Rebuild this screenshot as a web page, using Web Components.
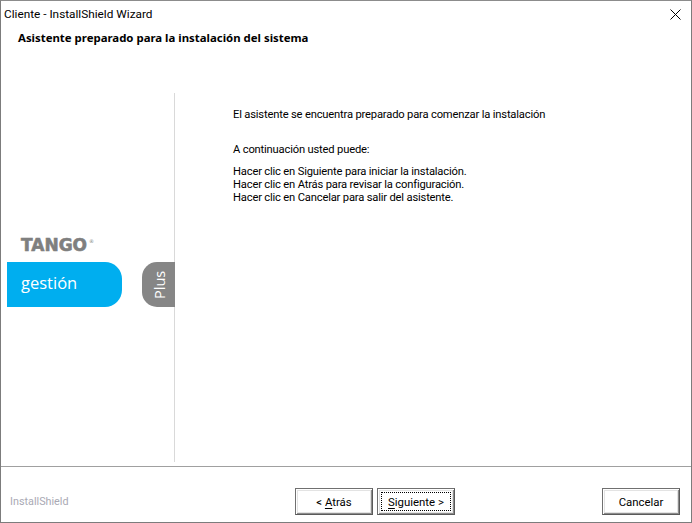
<!DOCTYPE html>
<html>
<head>
<meta charset="utf-8">
<title>Cliente - InstallShield Wizard</title>
<style>
  html, body { margin: 0; padding: 0; background: #fff; }
</style>
</head>
<body>
<wizard-window>
  <span slot="title">Cliente - InstallShield Wizard</span>
  <span slot="heading">Asistente preparado para la instalación del sistema</span>
  <tango-brand slot="side"></tango-brand>
  <wizard-message slot="main"></wizard-message>
  <wizard-button slot="back" label="&lt; " hot="A" rest="trás"></wizard-button>
  <wizard-button slot="next" label="" hot="S" rest="iguiente &gt;" focused></wizard-button>
  <wizard-button slot="cancel" rest="Cancelar"></wizard-button>
</wizard-window>

<script>
class WizardWindow extends HTMLElement {
  constructor() {
    super()
    this.attachShadow({ mode: 'open' })
    this.shadowRoot.innerHTML = /*html*/`
      <style>
        :host {
          display: flex;
          flex-direction: column;
          box-sizing: border-box;
          width: 692px;
          height: 523px;
          background: #fff;
          border: 1px solid #7c7c7c;
          border-top-color: #8c8c8c;
          font-family: Roboto, sans-serif;
          font-size: 11.2px;
          color: #000;
        }
        .titlebar {
          display: flex;
          justify-content: space-between;
          align-items: center;
          height: 26px;
          padding: 0 10px 0 3px;
          font-size: 11.8px;
          flex: none;
        }
        .close { width: 11px; height: 11px; display: block; }
        .heading {
          height: 24px;
          flex: none;
          padding-left: 17px;
          font-family: "Noto Sans", sans-serif;
          font-weight: 700;
          font-size: 11.4px;
          line-height: 22px;
        }
        .body {
          flex: 1;
          display: grid;
          grid-template-columns: 173px 1px 1fr;
          padding-top: 42px;
          padding-bottom: 4px;
        }
        .rule { background: #d9d9d9; }
        .foot {
          flex: none;
          box-sizing: border-box;
          height: 56px;
          border-top: 1px solid #a0a0a0;
          display: flex;
          align-items: flex-end;
          padding: 0 11px 7px 9px;
        }
        .brand { width: 285px; color: #a9a9b4; font-size: 10.8px; line-height: 14px; padding-bottom: 6px; }
        .gap { width: 4px; }
        .fill { flex: 1; }
      </style>
      <div class="titlebar">
        <slot name="title"></slot>
        <svg class="close" viewBox="0 0 11 11"><path d="M.5.5l10 10M10.500.5l-10 10" stroke="#000" fill="none"/></svg>
      </div>
      <div class="heading"><slot name="heading"></slot></div>
      <div class="body">
        <slot name="side"></slot>
        <div class="rule"></div>
        <slot name="main"></slot>
      </div>
      <div class="foot">
        <div class="brand">InstallShield</div>
        <slot name="back"></slot>
        <div class="gap"></div>
        <slot name="next"></slot>
        <div class="fill"></div>
        <slot name="cancel"></slot>
      </div>
    `
  }
}

class TangoBrand extends HTMLElement {
  constructor() {
    super()
    this.attachShadow({ mode: 'open' })
    this.shadowRoot.innerHTML = /*html*/`
      <style>
        :host {
          display: flex;
          flex-direction: column;
          justify-content: flex-start;
          padding-top: 144px;
          font-family: "Open Sans", sans-serif;
        }
        .logo {
          height: 16px;
          margin: 0 0 9px 20px;
          font-family: "DejaVu Sans", sans-serif;
          font-weight: 700;
          font-size: 17px;
          line-height: 16px;
          color: #7f7f7f;
          -webkit-text-stroke: .6px #7f7f7f;
          display: flex;
        }
        .logo sup { font-size: 5px; line-height: 8px; -webkit-text-stroke: 0; font-weight: 400; margin-left: 2px; }
        .row { display: flex; justify-content: space-between; align-items: stretch; padding-left: 6px; height: 45px; margin-right: -1px; }
        .gestion {
          width: 115px;
          background: #00aeef;
          color: #fff;
          border-radius: 0 17px 17px 0;
          font-size: 16.5px;
          line-height: 42px;
          padding-left: 14px;
          box-sizing: border-box;
        }
        .plus {
          width: 33px;
          background: #868686;
          color: #fff;
          font-size: 14.5px;
          writing-mode: vertical-rl;
          transform: rotate(180deg);
          border-radius: 0 15px 15px 0;
          text-align: center;
          line-height: 36px;
          position: relative;
        }
      </style>
      <div class="logo">TANGO<sup>®</sup></div>
      <div class="row">
        <div class="gestion">gestión</div>
        <div class="plus">Plus</div>
      </div>
    `
  }
}

class WizardMessage extends HTMLElement {
  constructor() {
    super()
    this.attachShadow({ mode: 'open' })
    this.shadowRoot.innerHTML = /*html*/`
      <style>
        :host {
          display: block;
          padding: 15px 0 0 58px;
          line-height: 13px;
          letter-spacing: -.18px;
        }
        p { margin: 0; white-space: nowrap; }
        .first { margin-bottom: 22px; }
        .second { margin-bottom: 9px; }
      </style>
      <p class="first">El asistente se encuentra preparado para comenzar la instalación</p>
      <p class="second">A continuación usted puede:</p>
      <p>Hacer clic en Siguiente para iniciar la instalación.</p>
      <p>Hacer clic en Atrás para revisar la configuración.</p>
      <p>Hacer clic en Cancelar para salir del asistente.</p>
    `
  }
}

class WizardButton extends HTMLElement {
  constructor() {
    super()
    this.attachShadow({ mode: 'open' })
    let hot = this.getAttribute('hot')
    this.shadowRoot.innerHTML = /*html*/`
      <style>
        :host {
          display: block;
          box-sizing: border-box;
          width: 78px;
          height: 27px;
          border: 1px solid #707070;
          border-right-color: #5a5a5a;
          border-bottom-color: #5a5a5a;
          box-shadow: inset 1px 1px 0 #fff, inset -1px -1px 0 #8c8c8c, inset 2px 2px 0 #e3e3e3, inset -2px -2px 0 #e3e3e3;
          background: #fff;
          padding: 4px;
          font-size: 11.4px;
        }
        .face {
          height: 100%;
          box-sizing: border-box;
          display: flex;
          justify-content: center;
          align-items: center;
          white-space: pre;
          outline: ${this.hasAttribute('focused') ? '1px dotted #000' : 'none'};
          outline-offset: 0;
        }
        u { text-underline-offset: 2px; }
      </style>
      <div class="face"><span>${this.getAttribute('label') || ''}${hot ? `<u>${hot}</u>` : ''}${this.getAttribute('rest')}</span></div>
    `
  }
}

customElements.define('wizard-window', WizardWindow)
customElements.define('tango-brand', TangoBrand)
customElements.define('wizard-message', WizardMessage)
customElements.define('wizard-button', WizardButton)
</script>
</body>
</html>
